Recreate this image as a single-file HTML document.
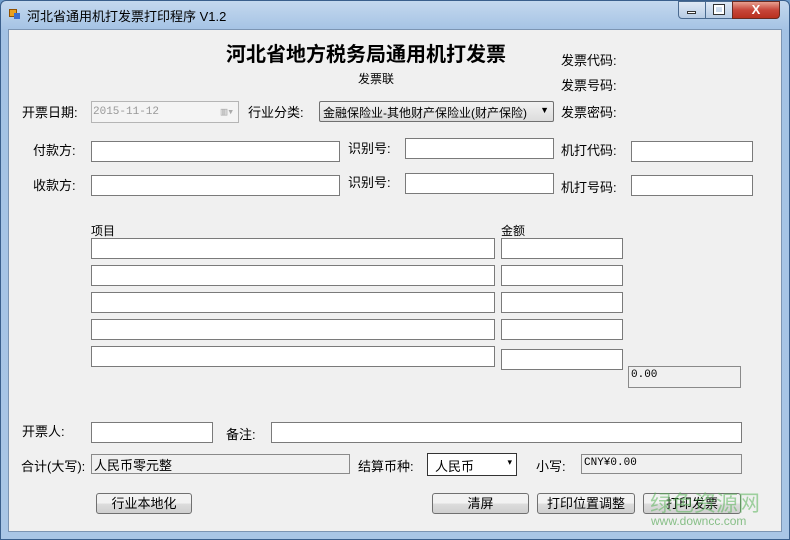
<!DOCTYPE html>
<html><head><meta charset="utf-8"><style>
*{margin:0;padding:0;box-sizing:border-box}
body{width:790px;height:540px;overflow:hidden;background:#6e9ccb;font-family:"Liberation Sans","Noto Sans CJK SC",sans-serif;font-size:12px;color:#000;position:relative}
#frame{position:absolute;left:0;top:0;width:790px;height:540px;background:linear-gradient(#c4d8ee,#a3c2e4 30px,#a9c6e6);border:1px solid #3a5f8c;border-radius:6px 6px 0 0}
#client{position:absolute;left:8px;top:29px;width:774px;height:503px;background:#f0f0f0;border:1px solid #7c95b3}
.a{position:absolute;white-space:nowrap}
.tb{position:absolute;background:#fff;border:1px solid #7a7a7a;height:21px}
.ro{position:absolute;background:#f0f0f0;border:1px solid #8a8a8a;height:20px;font-family:"Liberation Mono","Noto Sans CJK SC",monospace;font-size:11px;padding:2px}
.btn{position:absolute;height:21px;border:1px solid #707070;border-radius:3px;background:linear-gradient(#f2f2f2 50%,#dddddd 50%,#cfcfcf);text-align:center;line-height:19px;font-size:13px}
</style></head><body>
<div id="frame"></div>
<div class="a" style="left:9px;top:9px;width:8px;height:8px;background:#e8a020;border:1px solid #905000"></div>
<div class="a" style="left:14px;top:13px;width:6px;height:6px;background:#3a6ed0"></div>
<div class="a" style="left:27px;top:6px;font-size:13px;color:#000">河北省通用机打发票打印程序 V1.2</div>
<div class="a" style="left:678px;top:1px;width:28px;height:18px;border:1px solid #4a6a90;border-radius:0 0 0 4px;background:linear-gradient(#dfe9f5,#b7cbe4)"></div>
<div class="a" style="left:705px;top:1px;width:28px;height:18px;border:1px solid #4a6a90;background:linear-gradient(#dfe9f5,#b7cbe4)"></div>
<div class="a" style="left:732px;top:1px;width:48px;height:18px;border:1px solid #6a2a20;border-radius:0 0 4px 0;background:linear-gradient(#e8a090,#c7463a 50%,#b8301f);color:#fff;text-align:center;font-weight:bold;font-size:13px;line-height:16px">X</div>
<div class="a" style="left:687px;top:11px;width:9px;height:3px;background:#fff;border:1px solid #333"></div>
<div class="a" style="left:714px;top:5px;width:10px;height:9px;border:2px solid #fff;outline:1px solid #333"></div>
<div id="client"></div>
<div class="a" style="left:226px;top:38px;font-size:20px;font-weight:bold">河北省地方税务局通用机打发票</div>
<div class="a" style="left:358px;top:70px">发票联</div>
<div class="a" style="left:561px;top:50px;font-size:13px">发票代码:</div>
<div class="a" style="left:561px;top:75px;font-size:13px">发票号码:</div>
<div class="a" style="left:561px;top:102px;font-size:13px">发票密码:</div>
<div class="a" style="left:22px;top:102px;font-size:13px">开票日期:</div>
<div class="a" style="left:91px;top:101px;width:148px;height:22px;border:1px solid #b5b5b5;background:#f4f4f4;color:#999;font-family:'Liberation Mono',monospace;font-size:11px;padding:4px 1px">2015-11-12<span style="position:absolute;right:4px;top:3px;color:#aaa">▥▾</span></div>
<div class="a" style="left:248px;top:102px;font-size:13px">行业分类:</div>
<div class="a" style="left:319px;top:101px;width:235px;height:21px;border:1px solid #707070;border-radius:2px;background:linear-gradient(#f2f2f2,#dcdcdc);font-size:12px;padding:2px 3px;overflow:hidden">金融保险业-其他财产保险业(财产保险)<span style="position:absolute;right:4px;top:3px;font-size:9px">▼</span></div>
<div class="a" style="left:33px;top:140px;font-size:13px">付款方:</div>
<div class="tb" style="left:91px;top:141px;width:249px"></div>
<div class="a" style="left:348px;top:138px;font-size:13px">识别号:</div>
<div class="tb" style="left:405px;top:138px;width:149px"></div>
<div class="a" style="left:561px;top:140px;font-size:13px">机打代码:</div>
<div class="tb" style="left:631px;top:141px;width:122px"></div>
<div class="a" style="left:33px;top:175px;font-size:13px">收款方:</div>
<div class="tb" style="left:91px;top:175px;width:249px"></div>
<div class="a" style="left:348px;top:172px;font-size:13px">识别号:</div>
<div class="tb" style="left:405px;top:173px;width:149px"></div>
<div class="a" style="left:561px;top:177px;font-size:13px">机打号码:</div>
<div class="tb" style="left:631px;top:175px;width:122px"></div>
<div class="a" style="left:91px;top:222px">项目</div>
<div class="a" style="left:501px;top:222px">金额</div>
<div class="tb" style="left:91px;top:238px;width:404px"></div><div class="tb" style="left:501px;top:238px;width:122px"></div>
<div class="tb" style="left:91px;top:265px;width:404px"></div><div class="tb" style="left:501px;top:265px;width:122px"></div>
<div class="tb" style="left:91px;top:292px;width:404px"></div><div class="tb" style="left:501px;top:292px;width:122px"></div>
<div class="tb" style="left:91px;top:319px;width:404px"></div><div class="tb" style="left:501px;top:319px;width:122px"></div>
<div class="tb" style="left:91px;top:346px;width:404px"></div><div class="tb" style="left:501px;top:349px;width:122px"></div>
<div class="ro" style="left:628px;top:366px;width:113px;height:22px">0.00</div>
<div class="a" style="left:22px;top:421px;font-size:13px">开票人:</div>
<div class="tb" style="left:91px;top:422px;width:122px"></div>
<div class="a" style="left:226px;top:424px;font-size:13px">备注:</div>
<div class="tb" style="left:271px;top:422px;width:471px"></div>
<div class="a" style="left:21px;top:456px;font-size:13px">合计(大写):</div>
<div class="ro" style="left:91px;top:454px;width:259px;font-family:'Liberation Sans','Noto Sans CJK SC',sans-serif;font-size:13px;padding:0 2px">人民币零元整</div>
<div class="a" style="left:358px;top:456px;font-size:13px">结算币种:</div>
<div class="a" style="left:427px;top:453px;width:90px;height:23px;border:1px solid #333;background:#fff;font-size:13px;padding:2px 7px">人民币<span style="position:absolute;right:4px;top:3px;font-size:9px">▾</span></div>
<div class="a" style="left:536px;top:456px;font-size:13px">小写:</div>
<div class="ro" style="left:581px;top:454px;width:161px">CNY¥0.00</div>
<div class="btn" style="left:96px;top:493px;width:96px">行业本地化</div>
<div class="btn" style="left:432px;top:493px;width:97px">清屏</div>
<div class="btn" style="left:537px;top:493px;width:98px">打印位置调整</div>
<div class="btn" style="left:643px;top:493px;width:98px">打印发票</div>
<div class="a" style="left:650px;top:486px;font-size:22px;color:rgba(90,180,90,0.55)">绿色资源网</div>
<div class="a" style="left:651px;top:514px;font-size:12px;color:rgba(90,170,90,0.7)">www.downcc.com</div>
</body></html>
